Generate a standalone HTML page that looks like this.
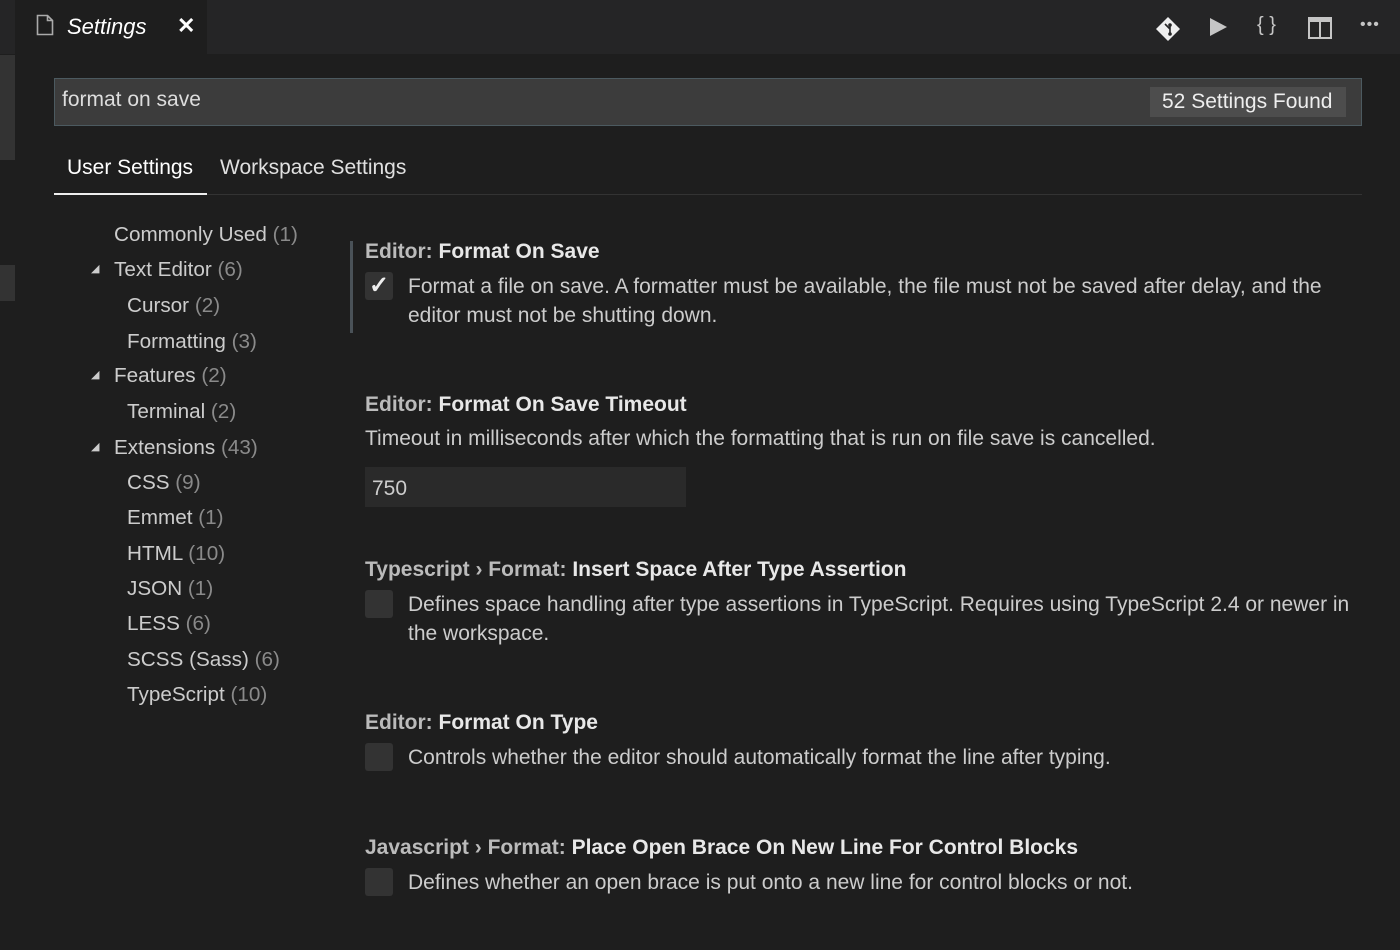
<!DOCTYPE html>
<html><head><meta charset="utf-8"><style>
*{margin:0;padding:0;box-sizing:border-box}
body{width:1400px;height:950px;background:#1e1e1e;font-family:"Liberation Sans",sans-serif;color:#ccc;position:relative;overflow:hidden;font-size:21px}
.a{position:absolute;white-space:nowrap}
.tabbar{position:absolute;left:0;top:0;width:1400px;height:54px;background:#252526}
.tab{position:absolute;left:15px;top:0;width:192px;height:54px;background:#1e1e1e}
.sb{position:absolute;left:0;width:15px;background:#333}
.tree{color:#ccc;font-size:20.7px}
.tree span{color:#8a8a8a}
.h{font-weight:bold;color:#e8e8e8}
.h b{color:#bbb}
.cb{position:absolute;width:28px;height:28px;background:#333;border-radius:3px}
.d{color:#ccc}
</style></head><body>
<div class="tabbar"></div>
<div class="tab"></div>
<div class="sb" style="top:0;height:54px;background:#252526"></div>
<div class="sb" style="top:55px;height:105px"></div>
<div class="sb" style="top:265px;height:36px"></div>
<svg class="a" style="left:36px;top:14px" width="18" height="22" viewBox="0 0 18 22"><path d="M1.5 1.5h10l5 5v14h-15z M11.5 1.5v5h5" fill="none" stroke="#aaa" stroke-width="1.6"/></svg>
<div class="a" style="left:67px;top:14px;font-style:italic;font-size:22px;color:#fff">Settings</div>
<div class="a" style="left:177px;top:13px;font-size:22px;color:#fff;font-weight:bold">✕</div>
<svg class="a" style="left:1155px;top:16px" width="26" height="26" viewBox="0 0 26 26"><path d="M13 1L25 13 13 25 1 13z" fill="#eee"/><path d="M10 8l5 5v5M15 13v-4" stroke="#252526" stroke-width="1.6" fill="none"/><circle cx="15" cy="18" r="1.8" fill="#252526"/><circle cx="15" cy="9" r="1.8" fill="#252526"/></svg>
<svg class="a" style="left:1208px;top:17px" width="20" height="20" viewBox="0 0 20 20"><path d="M2 1L19 10 2 19z" fill="#c5c5c5"/></svg>
<div class="a" style="left:1257px;top:14px;font-size:20px;color:#c5c5c5">{ }</div>
<svg class="a" style="left:1308px;top:17px" width="24" height="22" viewBox="0 0 24 22"><rect x="1" y="1" width="22" height="20" fill="none" stroke="#c5c5c5" stroke-width="2"/><rect x="1" y="1" width="22" height="4" fill="#c5c5c5"/><path d="M12 1v20" stroke="#c5c5c5" stroke-width="2"/></svg>
<div class="a" style="left:1360px;top:16px;font-size:16px;color:#c5c5c5;letter-spacing:1px">•••</div>

<div class="a" style="left:54px;top:78px;width:1308px;height:48px;background:#3c3c3c;border:1px solid #4c5a60"></div>
<div class="a" style="left:62px;top:88px;color:#ddd">format on save</div>
<div class="a" style="left:1150px;top:87px;width:196px;height:30px;background:#4d4d4d"></div>
<div class="a" style="left:1162px;top:90px;color:#eee">52 Settings Found</div>

<div class="a" style="left:67px;top:156px;color:#fff">User Settings</div>
<div class="a" style="left:220px;top:156px;color:#e0e0e0">Workspace Settings</div>
<div class="a" style="left:54px;top:194px;width:1308px;height:1px;background:#333"></div>
<div class="a" style="left:54px;top:193px;width:153px;height:2px;background:#eee"></div>

<div class="tree">
<div class="a" style="left:114px;top:223px">Commonly Used <span>(1)</span></div>
<div class="a" style="left:91px;top:262px;font-size:11px">◢</div>
<div class="a" style="left:114px;top:258px">Text Editor <span>(6)</span></div>
<div class="a" style="left:127px;top:294px">Cursor <span>(2)</span></div>
<div class="a" style="left:127px;top:330px">Formatting <span>(3)</span></div>
<div class="a" style="left:91px;top:368px;font-size:11px">◢</div>
<div class="a" style="left:114px;top:364px">Features <span>(2)</span></div>
<div class="a" style="left:127px;top:400px">Terminal <span>(2)</span></div>
<div class="a" style="left:91px;top:440px;font-size:11px">◢</div>
<div class="a" style="left:114px;top:436px">Extensions <span>(43)</span></div>
<div class="a" style="left:127px;top:471px">CSS <span>(9)</span></div>
<div class="a" style="left:127px;top:506px">Emmet <span>(1)</span></div>
<div class="a" style="left:127px;top:542px">HTML <span>(10)</span></div>
<div class="a" style="left:127px;top:577px">JSON <span>(1)</span></div>
<div class="a" style="left:127px;top:612px">LESS <span>(6)</span></div>
<div class="a" style="left:127px;top:648px">SCSS (Sass) <span>(6)</span></div>
<div class="a" style="left:127px;top:683px">TypeScript <span>(10)</span></div>
</div>

<div class="a" style="left:350px;top:241px;width:3px;height:92px;background:#4a5258"></div>
<div class="a h" style="left:365px;top:240px"><b>Editor: </b>Format On Save</div>
<div class="cb" style="left:365px;top:272px"></div>
<div class="a" style="left:369px;top:271px;color:#eee;font-size:24px;font-weight:bold">✓</div>
<div class="a d" style="left:408px;top:275px">Format a file on save. A formatter must be available, the file must not be saved after delay, and the</div>
<div class="a d" style="left:408px;top:304px">editor must not be shutting down.</div>

<div class="a h" style="left:365px;top:393px"><b>Editor: </b>Format On Save Timeout</div>
<div class="a d" style="left:365px;top:427px">Timeout in milliseconds after which the formatting that is run on file save is cancelled.</div>
<div class="a" style="left:365px;top:467px;width:321px;height:40px;background:#2a2a2a"></div>
<div class="a d" style="left:372px;top:477px">750</div>

<div class="a h" style="left:365px;top:558px"><b>Typescript › Format: </b>Insert Space After Type Assertion</div>
<div class="cb" style="left:365px;top:590px"></div>
<div class="a d" style="left:408px;top:593px">Defines space handling after type assertions in TypeScript. Requires using TypeScript 2.4 or newer in</div>
<div class="a d" style="left:408px;top:622px">the workspace.</div>

<div class="a h" style="left:365px;top:711px"><b>Editor: </b>Format On Type</div>
<div class="cb" style="left:365px;top:743px"></div>
<div class="a d" style="left:408px;top:746px">Controls whether the editor should automatically format the line after typing.</div>

<div class="a h" style="left:365px;top:836px"><b>Javascript › Format: </b>Place Open Brace On New Line For Control Blocks</div>
<div class="cb" style="left:365px;top:868px"></div>
<div class="a d" style="left:408px;top:871px">Defines whether an open brace is put onto a new line for control blocks or not.</div>
</body></html>
